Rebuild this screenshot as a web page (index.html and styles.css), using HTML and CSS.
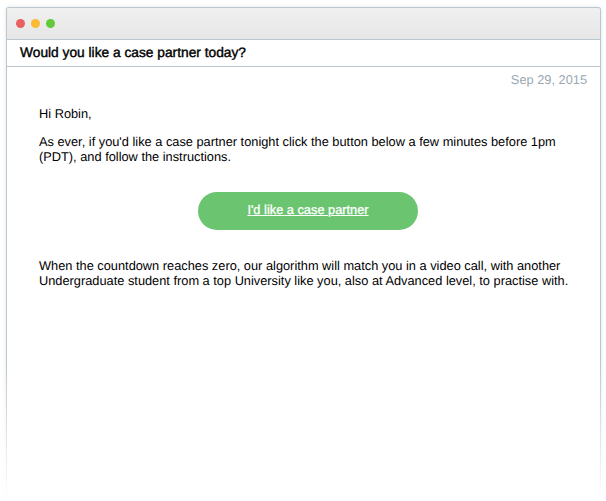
FILE: index.html
```html
<!DOCTYPE html>
<html lang="en">
<head>
<meta charset="utf-8">
<title>Case partner email</title>
<link rel="stylesheet" href="styles.css">
</head>
<body>
<div class="window">
  <div class="titlebar">
    <span class="dot dot-red"></span>
    <span class="dot dot-yellow"></span>
    <span class="dot dot-green"></span>
  </div>
  <h1 class="subject">Would you like a case partner today?</h1>
  <div class="date">Sep 29, 2015</div>
  <div class="message">
    <p class="greeting">Hi Robin,</p>
    <p class="para">As ever, if you'd like a case partner tonight click the button below a few minutes before 1pm (PDT), and follow the instructions.</p>
    <div class="cta-row"><a class="cta" href="#">I'd like a case partner</a></div>
    <p class="para">When the countdown reaches zero, our algorithm will match you in a video call, with another Undergraduate student from a top University like you, also at Advanced level, to practise with.</p>
  </div>
  <div class="fade"></div>
</div>
</body>
</html>
```
FILE: styles.css
```css
* { box-sizing: border-box; }
html, body { margin: 0; height: 100%; background: #fff; overflow: hidden; }
body { padding: 7px 5px 0 6px; font-family: "Liberation Sans", Arial, sans-serif; color: #000; text-rendering: geometricPrecision; }
.window {
  position: relative;
  height: 494px;
  border: 1px solid #b9c8d0;
  border-bottom: 0;
  border-radius: 3px 3px 0 0;
  background: #fff;
  box-shadow: 0 0 4px rgba(0,0,0,.1);
}
.titlebar {
  height: 32px;
  display: flex;
  align-items: center;
  gap: 6px;
  padding: 0 0 1px 9px;
  background: linear-gradient(#f0f0f0, #e6e6e6);
  border-bottom: 1px solid #b9c8d0;
  border-radius: 2px 2px 0 0;
}
.dot { width: 9px; height: 9px; border-radius: 50%; }
.dot-red { background: #e8605f; }
.dot-yellow { background: #fcbb33; }
.dot-green { background: #62c93a; }
.subject {
  margin: 0;
  height: 27px;
  padding: 0 0 0 13px;
  font-size: 13.75px;
  line-height: 25px;
  font-weight: 400;
  -webkit-text-stroke: 0.4px #000;
  color: #000;
  border-bottom: 1px solid #b9c8d0;
}
.date {
  padding: 5px 13px 0 0;
  text-align: right;
  font-size: 12.8px;
  line-height: 15px;
  color: #9aa8b2;
}
.message { padding: 19px 23px 0 32px; font-size: 12.8px; line-height: 15px; }
.message p { margin: 0; }
.greeting { margin-bottom: 13px !important; }
.cta-row { display: flex; justify-content: center; margin: 28px 0 28px; }
.cta {
  width: 220px;
  height: 38px;
  border-radius: 19px;
  background: #6bc470;
  color: #fff;
  font-size: 12.8px;
  line-height: 36px;
  text-align: center;
  text-decoration: underline;
  -webkit-text-stroke: 0.3px #fff;
}
.fade {
  position: absolute;
  left: -8px;
  right: -8px;
  bottom: 0;
  height: 140px;
  background: linear-gradient(rgba(255,255,255,0), #fff);
}
```
